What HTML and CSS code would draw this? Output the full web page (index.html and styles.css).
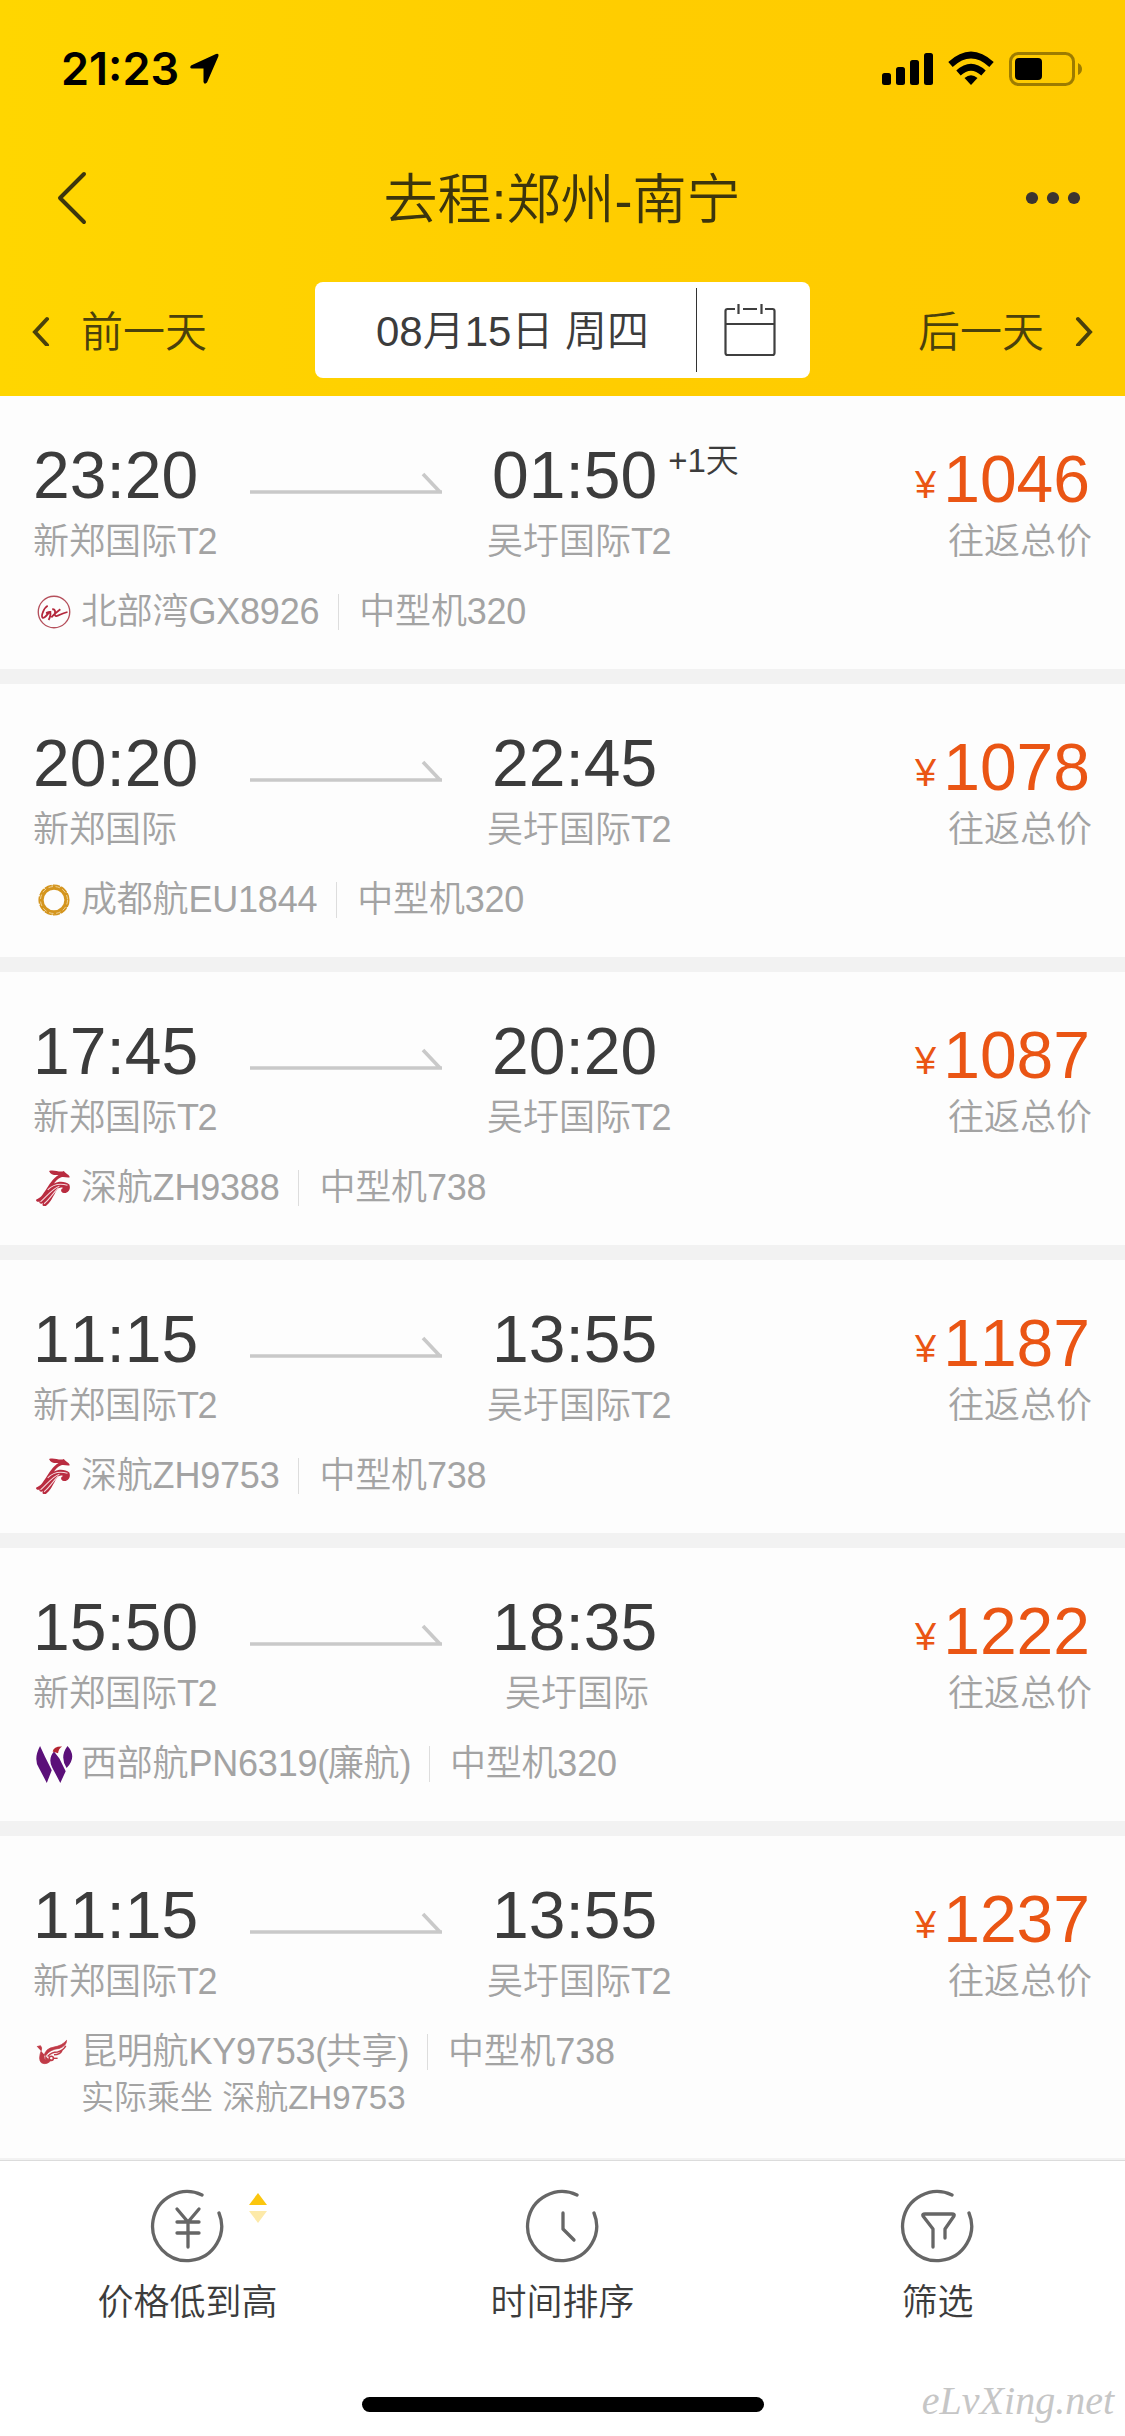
FILE: index.html
```html
<!DOCTYPE html>
<html lang="zh-CN">
<head>
<meta charset="utf-8">
<title>去程:郑州-南宁</title>
<link rel="stylesheet" href="styles.css">
</head>
<body>
<svg class="defs" width="0" height="0">
  <symbol id="arrow" viewBox="0 0 192 24"><path d="M0 20H192M173 2L190 20" fill="none" stroke="#c9c9c9" stroke-width="3.6"/></symbol>
  <symbol id="zh" viewBox="0 0 40 40"><path d="M14.500 1C20 -1 26 3 31 1C33 4 37 5 37.500 8C35 9 31 7 28 8C24 10 22 12 20 15C26 12 33 13 37 16C39 21 36 26 31 25.500C27 25 27 21 30 20C26 18 23 22 21 26C18 31 16 36 11 40C8 41 6 39 8 37C5 38 3 37 4 35C2 36 0 35 0 33C6 31 8 26 11 22C15 16 18 10 25 5.500C20 6 16 5 14.500 1Z" fill="#b92c40"/><path d="M35 17C25 14 18 17 13 22M26 18C19 20 13 28 5 35.500M25 20C19 25 16 32 9 37.500" fill="none" stroke="#f6d9dd" stroke-width="1.200"/></symbol>
</svg>
<div class="page">
  <header class="header">
    <div class="status">
      <div class="clock"><span>21:23</span><svg width="30" height="32" viewBox="0 0 30 32"><path d="M27 1L2 12.500Q0 15 3 15.500H14.500V29Q15.500 32 18 29.500L29.500 3Q30 0 27 1Z"/></svg></div>
      <svg width="201" height="36" viewBox="881 51 201 36">
        <rect x="882" y="73" width="9" height="12" rx="2.500"/><rect x="896" y="67" width="9" height="18" rx="2.500"/><rect x="910" y="60" width="9" height="25" rx="2.500"/><rect x="924" y="53" width="9" height="32" rx="2.500"/>
        <path d="M950.500 64.500Q971 45.500 991.500 64.500M958.500 73Q971 61.500 983.500 73" fill="none" stroke="#000" stroke-width="6.500"/><path d="M964.500 78Q971 72.500 977.500 78L971 85Z"/>
        <rect x="1010.500" y="53.500" width="63" height="31" rx="8" fill="none" stroke="#9d7c00" stroke-width="3"/><rect x="1015" y="58" width="27" height="22" rx="4"/><path d="M1078 63Q1082 65 1082 69T1078 75Z" fill="#9d7c00"/>
      </svg>
    </div>
    <div class="nav">
      <svg width="30" height="56" viewBox="0 0 30 56"><path d="M27 4L3 28L27 52" fill="none" stroke="#3c350d" stroke-width="4" stroke-linecap="round" stroke-linejoin="round"/></svg>
      <h1>去程:郑州-南宁</h1>
      <svg width="56" height="14" viewBox="0 0 56 14" fill="#3b3430"><circle cx="7" cy="7" r="6.100"/><circle cx="28" cy="7" r="6.100"/><circle cx="49" cy="7" r="6.100"/></svg>
    </div>
    <div class="days">
      <div class="day prev"><svg width="18" height="32" viewBox="0 0 18 32"><path d="M15 5L3 18L15 31" fill="none" stroke="#4a410c" stroke-width="4" stroke-linecap="round"/></svg><span>前一天</span></div>
      <div class="date"><span class="date-text">08月15日 周四</span>
        <span class="date-icon"><svg width="52" height="54" viewBox="0 0 52 54" fill="none" stroke="#3f3f3f" stroke-width="2.200"><path d="M11 6H3.500Q1.500 6 1.500 8V50Q1.500 52 3.500 52H48.500Q50.500 52 50.500 50V8Q50.500 6 48.500 6H41M1.500 21H50.500M19 6H33M14.500 1V11M37.500 1V11"/></svg></span>
      </div>
      <div class="day next"><span>后一天</span><svg width="18" height="32" viewBox="0 0 18 32"><path d="M3 5L15 18L3 31" fill="none" stroke="#4a410c" stroke-width="4" stroke-linecap="round"/></svg></div>
    </div>
  </header>

  <main class="list">
    <article class="flight">
      <div class="route">
        <div class="stop"><b>23:20</b><span>新郑国际<i>T2</i></span></div>
        <svg class="arrow"><use href="#arrow"/></svg>
        <div class="stop arrive"><b>01:50<sup>+1天</sup></b><span>吴圩国际<i>T2</i></span></div>
        <div class="price"><b><small>¥</small>1046</b><span>往返总价</span></div>
      </div>
      <div class="carrier">
        <svg class="logo" viewBox="0 0 40 40"><circle cx="20" cy="20" r="17.500" fill="none" stroke="#b5505c" stroke-width="1.500"/><path d="M13 13C9 15 5 25 7.500 26.500C10 27 13 22 15 20C13 20 12 21 11 21M15 20C17 19 16 26 14 29M18 17C24 16 19 25 22.500 24.500C26 24 27 22 35 20M27 17C23 20 20 22 17 26" fill="none" stroke="#b3273b" stroke-width="2"/></svg>
        <span class="name">北部湾GX8926</span><span class="model">中型机320</span>
      </div>
    </article>
    <article class="flight">
      <div class="route">
        <div class="stop"><b>20:20</b><span>新郑国际</span></div>
        <svg class="arrow"><use href="#arrow"/></svg>
        <div class="stop arrive"><b>22:45</b><span>吴圩国际<i>T2</i></span></div>
        <div class="price"><b><small>¥</small>1078</b><span>往返总价</span></div>
      </div>
      <div class="carrier">
        <svg class="logo" viewBox="0 0 40 40" fill="none" stroke="#d4951e"><circle cx="20" cy="20" r="14" stroke-width="5"/><circle cx="20" cy="20" r="16.500" stroke-width="1.600" stroke-dasharray="8 1.500"/><circle cx="20" cy="20" r="15" stroke="#f9e8bf" stroke-width=".8" stroke-dasharray="5 3"/></svg>
        <span class="name">成都航EU1844</span><span class="model">中型机320</span>
      </div>
    </article>
    <article class="flight">
      <div class="route">
        <div class="stop"><b>17:45</b><span>新郑国际<i>T2</i></span></div>
        <svg class="arrow"><use href="#arrow"/></svg>
        <div class="stop arrive"><b>20:20</b><span>吴圩国际<i>T2</i></span></div>
        <div class="price"><b><small>¥</small>1087</b><span>往返总价</span></div>
      </div>
      <div class="carrier">
        <svg class="logo"><use href="#zh"/></svg>
        <span class="name">深航ZH9388</span><span class="model">中型机738</span>
      </div>
    </article>
    <article class="flight">
      <div class="route">
        <div class="stop"><b>11:15</b><span>新郑国际<i>T2</i></span></div>
        <svg class="arrow"><use href="#arrow"/></svg>
        <div class="stop arrive"><b>13:55</b><span>吴圩国际<i>T2</i></span></div>
        <div class="price"><b><small>¥</small>1187</b><span>往返总价</span></div>
      </div>
      <div class="carrier">
        <svg class="logo"><use href="#zh"/></svg>
        <span class="name">深航ZH9753</span><span class="model">中型机738</span>
      </div>
    </article>
    <article class="flight">
      <div class="route">
        <div class="stop"><b>15:50</b><span>新郑国际<i>T2</i></span></div>
        <svg class="arrow"><use href="#arrow"/></svg>
        <div class="stop arrive"><b>18:35</b><span>吴圩国际</span></div>
        <div class="price"><b><small>¥</small>1222</b><span>往返总价</span></div>
      </div>
      <div class="carrier">
        <svg class="logo" viewBox="0 0 40 40"><path d="M4.500 0L10 12L17.500 27L12 41L3 24Q-3 14 4.500 0ZM20 6L26 14L33 28L27 41L18 24Q13 14 20 6ZM35 0Q46 12 34 24.500Q26 12 35 0Z" fill="#5b1079"/><path d="M18.500 6Q20 0 29 .5Q25 3 24.500 8Z" fill="#b3242f"/></svg>
        <span class="name">西部航PN6319<i>(</i>廉航<i>)</i></span><span class="model">中型机320</span>
      </div>
    </article>
    <article class="flight last">
      <div class="route">
        <div class="stop"><b>11:15</b><span>新郑国际<i>T2</i></span></div>
        <svg class="arrow"><use href="#arrow"/></svg>
        <div class="stop arrive"><b>13:55</b><span>吴圩国际<i>T2</i></span></div>
        <div class="price"><b><small>¥</small>1237</b><span>往返总价</span></div>
      </div>
      <div class="carrier">
        <svg class="logo" viewBox="0 0 40 40" fill="none" stroke="#c03a47" stroke-width="1.700"><path d="M1 14L5 13Q7 15 6 18Q2 28 6 32Q12 35 17 29L14 28Q9 30 9 25Q10 16 20 14.500Q29 13 34 7Q34 13 26 16Q15 17 11 24Q9 30 14 28" fill="#c03a47" stroke-width=".8"/><path d="M33 13Q31 18 24 20Q17 20 13 25M29 18Q27 23 20 23"/><circle cx="17" cy="27" r="2.300"/><path d="M20 27H24" stroke-width="1.500"/></svg>
        <span class="name">昆明航KY9753<i>(</i>共享<i>)</i></span><span class="model">中型机738</span>
      </div>
      <p class="actual">实际乘坐 深航ZH9753</p>
    </article>
  </main>

  <footer class="tabs">
    <div class="tab"><svg class="tab-icon" viewBox="0 0 76 76"><path d="M52 6A34.500 34.500 0 1 0 69 24"/><path d="M27 20L38 33L49 20M27 33H49M27 44H49M38 33V58"/></svg><span>价格低到高</span>
      <svg class="sorter" width="18" height="30" viewBox="0 0 18 30"><path d="M9 0L18 12H0Z" fill="#fbc60e"/><path d="M0 18H18L9 30Z" fill="#fdeaa9"/></svg></div>
    <div class="tab"><svg class="tab-icon" viewBox="0 0 76 76"><path d="M52 6A34.500 34.500 0 1 0 69 24"/><path d="M38 24V40L49 51"/></svg><span>时间排序</span></div>
    <div class="tab"><svg class="tab-icon" viewBox="0 0 76 76"><path d="M52 6A34.500 34.500 0 1 0 69 24"/><path d="M33 58V40L23 27Q22 25 25 25H52Q55 25 54 27L45 40V49"/></svg><span>筛选</span></div>
    <div class="home"></div>
    <div class="mark">eLvXing.net</div>
  </footer>
</div>
</body>
</html>
```
FILE: styles.css
```css
* { box-sizing: border-box; margin: 0; padding: 0; }
body { width: 1125px; background: #fff; font-family: "Liberation Sans", "Noto Sans CJK SC", sans-serif; font-weight: 350; font-kerning: none; color: #3c3c3c; }
svg { display: block; flex: none; }
i { font-style: normal; letter-spacing: -1.5px; }
.defs { position: absolute; }
.page { height: 2436px; display: flex; flex-direction: column; overflow: hidden; white-space: nowrap; }

.header { height: 396px; flex: none; background: linear-gradient(90deg, #ffd600, #ffcd00 55%, #ffcb00); }
.status { height: 138px; padding: 0 43px 0 61px; display: flex; align-items: center; justify-content: space-between; }
.clock { display: flex; align-items: center; gap: 10px; font: 600 45px/54px Inter, sans-serif; color: #000; }
.nav { height: 120px; padding: 0 44px 0 57px; display: flex; align-items: center; justify-content: space-between; }
.nav h1 { font-size: 54px; font-weight: 350; color: #3c350d; line-height: 72px; padding: 3px 0 0 12px; }
.days { padding: 24px 32px 0; display: flex; align-items: center; justify-content: space-between; }
.day { display: flex; align-items: center; gap: 31px; font-size: 42px; line-height: 60px; color: #4a410c; }
.day span { padding-top: 6px; }
.date-text { padding-top: 4px; }
.date { width: 495px; height: 96px; border-radius: 8px; background: #fff; display: flex; align-items: center; font-size: 42px; }
.date-text { width: 381px; padding-left: 61px; line-height: 60px; }
.date-icon { flex: 1; height: 84px; border-left: 1.500px solid #333; padding-left: 27px; display: flex; align-items: center; }

.list { background: #f2f2f2; display: flex; flex-direction: column; gap: 15px; height: 1764px; flex: none; }
.flight { height: 273px; background: #fdfdfd; padding: 42px 33px 0; flex: none; }
.flight.last { height: 322px; }
.route { height: 149px; display: flex; }
.stop { width: 217px; display: flex; flex-direction: column; }
.stop b, .price b { font-weight: 400; font-size: 66px; line-height: 75px; height: 81px; }
.stop span, .price span { font-size: 36px; line-height: 46px; color: #a3a3a3; }
.arrow { width: 192px; height: 24px; margin-top: 34px; }
.arrive { width: 180px; margin-left: 45px; }
.arrive b { padding-left: 5px; }
.arrive span { text-align: center; }
.stop sup { font-size: 33px; font-weight: 350; line-height: 40px; vertical-align: 26px; margin-left: 11px; }
.price { margin-left: auto; display: flex; flex-direction: column; align-items: flex-end; color: #ea5514; }
.price b { padding: 4px 2px 0 0; }
.price small { font-size: 38px; margin-right: 7px; position: relative; top: -4px; }
.carrier { height: 50px; display: flex; align-items: center; font-size: 36px; line-height: 50px; color: #a3a3a3; }
.logo { width: 36px; height: 36px; overflow: visible; margin: 0 2px 0 3px; }
.name { margin-left: 7px; letter-spacing: -0.2px; }
.model { margin-left: 19px; height: 36px; line-height: 36px; border-left: 1px solid #ddd; padding-left: 20px; letter-spacing: -0.2px; }
.actual { padding-left: 48px; font-size: 33px; line-height: 42px; color: #a3a3a3; }

.tabs { height: 276px; flex: none; background: #fff; border-top: 1px solid #dcdcdc; display: grid; grid-template-columns: repeat(3, 1fr); position: relative; }
.tab { padding-top: 28px; display: flex; flex-direction: column; align-items: center; font-size: 36px; line-height: 50px; position: relative; }
.tab span { margin-top: 13px; }
.tab-icon { width: 76px; height: 76px; fill: none; stroke: #666; stroke-width: 3.300; stroke-linecap: round; stroke-linejoin: round; }
.sorter { position: absolute; left: 249px; top: 32px; }
.home { position: absolute; left: 362px; top: 236px; width: 402px; height: 15px; border-radius: 8px; background: #000; }
.mark { position: absolute; right: 11px; top: 216px; font: italic 400 40px/48px "Liberation Serif", serif; color: #c6c6c6; }
```
